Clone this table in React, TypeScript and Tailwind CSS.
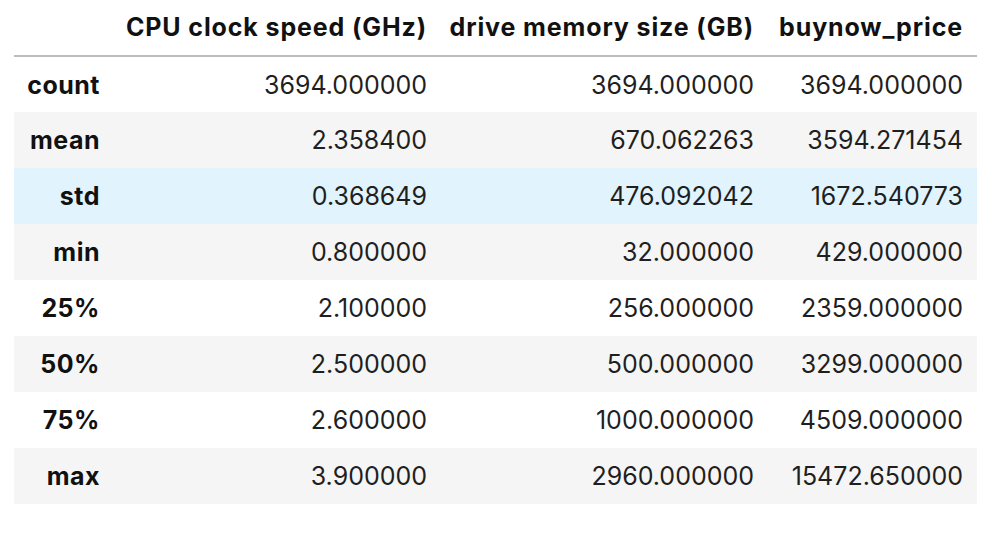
import React from 'react';

const columns = ['CPU clock speed (GHz)', 'drive memory size (GB)', 'buynow_price'];

const rows: [string, string, string, string][] = [
  ['count', '3694.000000', '3694.000000', '3694.000000'],
  ['mean', '2.358400', '670.062263', '3594.271454'],
  ['std', '0.368649', '476.092042', '1672.540773'],
  ['min', '0.800000', '32.000000', '429.000000'],
  ['25%', '2.100000', '256.000000', '2359.000000'],
  ['50%', '2.500000', '500.000000', '3299.000000'],
  ['75%', '2.600000', '1000.000000', '4509.000000'],
  ['max', '3.900000', '2960.000000', '15472.650000'],
];

export default function App() {
  return (
    <div className="min-h-screen bg-white pl-[14px] font-['Inter','Liberation_Sans',sans-serif] text-[25px] text-[#1f1f1f]">
      <table className="table-fixed border-collapse">
        <colgroup>
          <col className="w-[100px]" />
          <col className="w-[327px]" />
          <col className="w-[327px]" />
          <col className="w-[209px]" />
        </colgroup>
        <thead>
          <tr className="h-[56px] border-b-2 border-[#bdbdbd]">
            <th />
            {columns.map((c) => (
              <th
                key={c}
                className="pr-[14px] text-right font-bold tracking-[0.035em] text-[#111] whitespace-nowrap"
              >
                {c}
              </th>
            ))}
          </tr>
        </thead>
        <tbody>
          {rows.map((r, i) => (
            <tr
              key={r[0]}
              className={`h-[56px] ${
                r[0] === 'std' ? 'bg-[#e1f4fd]' : i % 2 === 1 ? 'bg-[#f5f5f5]' : 'bg-white'
              }`}
            >
              <th className="pr-[14px] pt-[2px] text-right font-bold tracking-[0.02em] text-[#111]">{r[0]}</th>
              {r.slice(1).map((v, j) => (
                <td key={j} className="pr-[14px] pt-[2px] text-right">
                  {v}
                </td>
              ))}
            </tr>
          ))}
        </tbody>
      </table>
    </div>
  );
}
